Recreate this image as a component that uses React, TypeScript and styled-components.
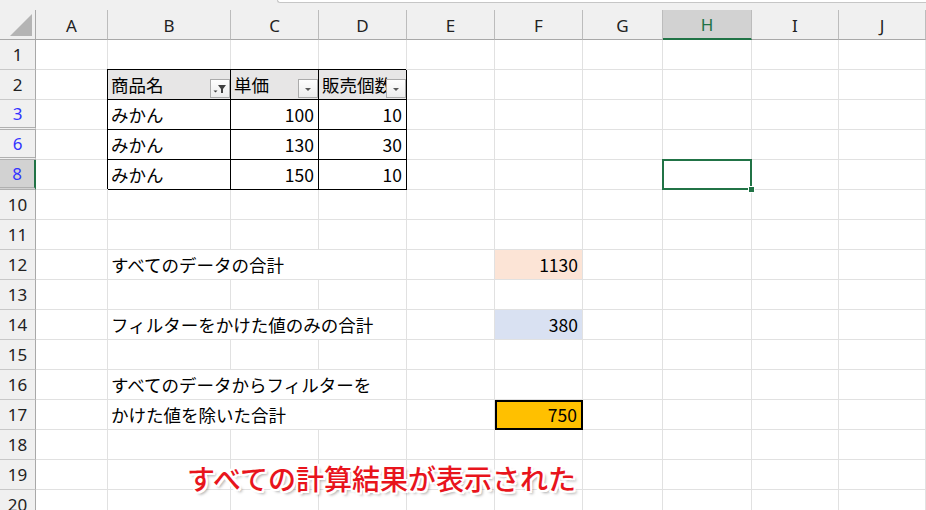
import React from "react";
import styled, { createGlobalStyle, css } from "styled-components";

type CellDef = {
  text?: string;
  num?: boolean;
  fill?: string;
  box?: "thin" | "thick";
  head?: boolean;
  filter?: "funnel" | "arrow";
  span?: number;
  selected?: boolean;
};

const COLS = ["A", "B", "C", "D", "E", "F", "G", "H", "I", "J"];
const WIDTHS = [72, 123, 88, 88, 88, 88, 80, 89, 87, 87];
const ROWS = [1, 2, 3, 6, 8, 10, 11, 12, 13, 14, 15, 16, 17, 18, 19, 20];
const FILTERED = [3, 6, 8];
const BEFORE_HIDDEN = [3, 6, 8];
const ACTIVE_COL = "H";
const ACTIVE_ROW = 8;

const CELLS: Record<string, CellDef> = {
  B2: { text: "商品名", head: true, box: "thin", filter: "funnel" },
  C2: { text: "単価", head: true, box: "thin", filter: "arrow" },
  D2: { text: "販売個数", head: true, box: "thin", filter: "arrow" },
  B3: { text: "みかん", box: "thin" },
  C3: { text: "100", num: true, box: "thin" },
  D3: { text: "10", num: true, box: "thin" },
  B6: { text: "みかん", box: "thin" },
  C6: { text: "130", num: true, box: "thin" },
  D6: { text: "30", num: true, box: "thin" },
  B8: { text: "みかん", box: "thin" },
  C8: { text: "150", num: true, box: "thin" },
  D8: { text: "10", num: true, box: "thin" },
  H8: { selected: true },
  B12: { text: "すべてのデータの合計", span: 3 },
  F12: { text: "1130", num: true, fill: "#fce4d6" },
  B14: { text: "フィルターをかけた値のみの合計", span: 3 },
  F14: { text: "380", num: true, fill: "#d9e1f2" },
  B16: { text: "すべてのデータからフィルターを", span: 3 },
  B17: { text: "かけた値を除いた合計", span: 3 },
  F17: { text: "750", num: true, fill: "#ffc000", box: "thick" },
};

const GlobalStyle = createGlobalStyle`
  html, body {
    margin: 0;
    padding: 0;
    background: #fff;
    overflow: hidden;
  }
  body {
    font-family: "Noto Sans CJK JP", "Noto Sans", sans-serif;
  }
`;

const Sheet = styled.div`
  position: relative;
  width: 926px;
  height: 510px;
  overflow: hidden;
  background: #fff;
`;

const TopBar = styled.div`
  display: flex;
  height: 10px;
  background: #f0f0f0;
`;

const FormulaEdge = styled.div`
  flex: 1;
  margin-left: 277px;
  height: 2px;
  background: #fff;
  border-left: 1px solid #c6c6c6;
  border-bottom: 1px solid #c6c6c6;
  border-bottom-left-radius: 4px;
`;

const Grid = styled.div`
  display: grid;
  grid-template-columns: 36px ${WIDTHS.map((w) => `${w}px`).join(" ")};
  grid-auto-rows: 30px;
`;

const Corner = styled.div`
  box-sizing: border-box;
  display: flex;
  align-items: flex-end;
  justify-content: flex-end;
  padding: 0 3px 3px 0;
  background: #f0f0f0;
  border-right: 1px solid #a8a8a8;
  border-bottom: 1px solid #a8a8a8;

  svg {
    display: block;
  }
`;

const HeaderBase = css`
  box-sizing: border-box;
  display: flex;
  align-items: center;
  justify-content: center;
  font-family: "Noto Sans", "Noto Sans CJK JP", sans-serif;
  font-size: 17px;
`;

const ColHeader = styled.div<{ $active?: boolean }>`
  ${HeaderBase};
  padding-top: 1px;
  background: ${(p) => (p.$active ? "#d2d2d2" : "#f0f0f0")};
  color: ${(p) => (p.$active ? "#217346" : "#222")};
  border-right: 1px solid #bcbcbc;
  border-bottom: ${(p) => (p.$active ? "2px solid #217346" : "1px solid #a8a8a8")};
`;

const RowHeader = styled.div<{ $active?: boolean; $filtered?: boolean; $gap?: boolean }>`
  ${HeaderBase};
  background: ${(p) => (p.$active ? "#d2d2d2" : "#f0f0f0")};
  color: ${(p) => (p.$filtered ? "#3333ff" : "#222")};
  border-right: ${(p) => (p.$active ? "2px solid #217346" : "1px solid #a8a8a8")};
  border-bottom: ${(p) => (p.$gap ? "3px double #b0b0b0" : "1px solid #c8c8c8")};
`;

const Cell = styled.div<{
  $num?: boolean;
  $fill?: string;
  $box?: "thin" | "thick";
  $head?: boolean;
  $span?: number;
  $selected?: boolean;
}>`
  position: relative;
  box-sizing: border-box;
  display: flex;
  align-items: center;
  justify-content: ${(p) => (p.$num ? "flex-end" : "flex-start")};
  padding: 0 4px 0 3px;
  white-space: nowrap;
  overflow: ${(p) => (p.$selected ? "visible" : "hidden")};
  font-size: 17.5px;
  color: #000;
  grid-column: span ${(p) => p.$span ?? 1};
  background: ${(p) => (p.$head ? "#e7e6e6" : p.$fill ?? "transparent")};
  border-right: 1px solid #e1e1e1;
  border-bottom: 1px solid #e1e1e1;

  ${(p) =>
    p.$box === "thin" &&
    css`
      border-right-color: #000;
      border-bottom-color: #000;
      box-shadow: -1px -1px 0 0 #000;
    `}

  ${(p) =>
    p.$box === "thick" &&
    css`
      border-right: 2px solid #000;
      border-bottom: 2px solid #000;
      box-shadow: inset 2px 2px 0 0 #000;
    `}

  ${(p) =>
    p.$selected &&
    css`
      z-index: 2;
      &::after {
        content: "";
        position: absolute;
        top: -1px;
        left: -1px;
        right: -1px;
        bottom: -1px;
        border: 2px solid #217346;
      }
      &::before {
        content: "";
        position: absolute;
        right: -4px;
        bottom: -4px;
        width: 5px;
        height: 5px;
        background: #217346;
        border: 1px solid #fff;
        z-index: 1;
      }
    `}
`;

const FilterButton = styled.div`
  position: absolute;
  right: 0;
  bottom: 1px;
  box-sizing: border-box;
  width: 20px;
  height: 19px;
  border: 1px solid #ababab;
  background: linear-gradient(#fefefe, #ececec);

  svg {
    display: block;
  }
`;

const Callout = styled.div`
  position: absolute;
  left: 187px;
  top: 460px;
  font-family: "Noto Sans CJK JP", sans-serif;
  font-size: 28px;
  font-weight: 500;
  line-height: 36px;
  color: #e8141c;
  white-space: nowrap;
  text-shadow: 2px 0 0 #fff, -2px 0 0 #fff, 0 2px 0 #fff, 0 -2px 0 #fff,
    2px 2px 0 #fff, -2px -2px 0 #fff, 2px -2px 0 #fff, -2px 2px 0 #fff,
    3px 3px 3px rgba(0, 0, 0, 0.35);
`;

const FilterIcon = ({ kind }: { kind: "funnel" | "arrow" }) => (
  <svg width="18" height="17" viewBox="0 0 18 17">
    {kind === "funnel" ? (
      <>
        <polygon points="7,5 15,5 12,9 12,13 10,13 10,9" fill="#404040" />
        <polygon points="2.5,10.5 6.5,10.5 4.5,12.5" fill="#404040" />
      </>
    ) : (
      <polygon points="6,8 12,8 9,11" fill="#595959" />
    )}
  </svg>
);

const App = () => {
  const body: React.ReactNode[] = [];

  ROWS.forEach((row) => {
    body.push(
      <RowHeader
        key={`r${row}`}
        $active={row === ACTIVE_ROW}
        $filtered={FILTERED.includes(row)}
        $gap={BEFORE_HIDDEN.includes(row)}
      >
        {row}
      </RowHeader>
    );
    let skip = 0;
    COLS.forEach((col) => {
      if (skip > 0) {
        skip--;
        return;
      }
      const def = CELLS[`${col}${row}`] ?? {};
      if (def.span) skip = def.span - 1;
      body.push(
        <Cell
          key={`${col}${row}`}
          $num={def.num}
          $fill={def.fill}
          $box={def.box}
          $head={def.head}
          $span={def.span}
          $selected={def.selected}
        >
          {def.text}
          {def.filter && (
            <FilterButton>
              <FilterIcon kind={def.filter} />
            </FilterButton>
          )}
        </Cell>
      );
    });
  });

  return (
    <>
      <GlobalStyle />
      <Sheet>
        <TopBar>
          <FormulaEdge />
        </TopBar>
        <Grid>
          <Corner>
            <svg width="22" height="22" viewBox="0 0 22 22">
              <polygon points="22,0 22,22 0,22" fill="#b4b4b4" />
            </svg>
          </Corner>
          {COLS.map((c) => (
            <ColHeader key={c} $active={c === ACTIVE_COL}>
              {c}
            </ColHeader>
          ))}
          {body}
        </Grid>
        <Callout>すべての計算結果が表示された</Callout>
      </Sheet>
    </>
  );
};

export default App;
